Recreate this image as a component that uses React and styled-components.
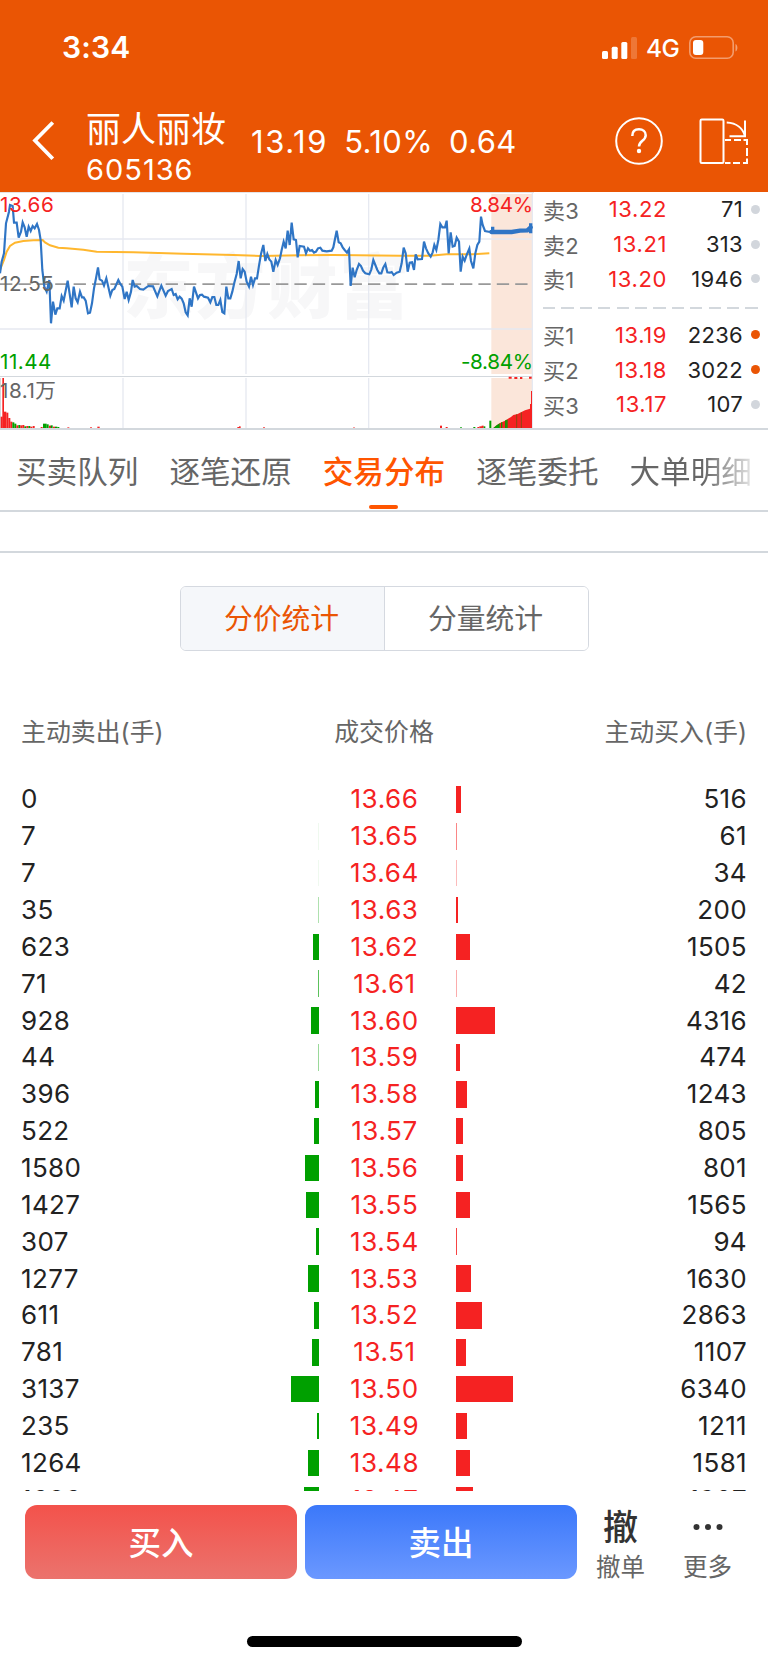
import { useState } from 'react';
import styled, { createGlobalStyle } from 'styled-components';

const GlobalStyle = createGlobalStyle`
    * {
        box-sizing: border-box;
    }
    body {
        margin: 0;
        background: #fff;
        font-family: Inter, "Noto Sans CJK SC", sans-serif;
    }
`;

const Page = styled.div`
    display: flex;
    flex-direction: column;
    width: 768px;
    height: 1663px;
    overflow: hidden;
    background: #fff;
    color: #222;
    white-space: nowrap;
`;

const TopArea = styled.header`
    height: 192px;
    flex: none;
    background: #ea5504;
    color: #fff;
`;

const StatusBar = styled.div`
    display: flex;
    align-items: center;
    justify-content: space-between;
    height: 94px;
    padding: 0 30px 0 62px;
`;

const Clock = styled.div`
    font-size: 30px;
    font-weight: 600;
    letter-spacing: 0.2px;
`;

const StatusIcons = styled.div`
    display: flex;
    align-items: center;
    padding-top: 1px;
    & svg {
        display: block;
    }
`;

const Network = styled.span`
    width: 42px;
    padding-left: 9px;
    font-size: 24.5px;
    font-weight: 450;
    line-height: 24px;
    letter-spacing: -0.5px;
    margin-right: 10px;
`;

const NavBar = styled.div`
    display: flex;
    align-items: center;
    height: 98px;
    padding: 0 19px 4px 32px;
    & svg {
        display: block;
        flex: none;
    }
`;

const StockTitle = styled.div`
    display: flex;
    flex-direction: column;
    width: 139px;
    margin-left: 30px;
    padding-top: 15px;
`;

const StockName = styled.div`
    font-size: 35px;
    line-height: 42px;
`;

const StockCode = styled.div`
    font-size: 29px;
    line-height: 40px;
    letter-spacing: 1px;
`;

const Quote = styled.div`
    display: flex;
    flex: 1;
    gap: 16px;
    margin-left: 26px;
    font-size: 31px;
    letter-spacing: 0.4px;
    & > :first-child {
        letter-spacing: 1.6px;
    }
`;

const NavActions = styled.div`
    display: flex;
    gap: 36px;
    align-items: center;
`;

const Market = styled.section`
    display: flex;
    flex: none;
    height: 238px;
    border-bottom: 2px solid #d3d8dd;
`;

const ChartSvg = styled.svg`
    display: block;
    flex: none;
    width: 534px;
    height: 236px;
    font-family: Inter, "Noto Sans CJK SC", sans-serif;
`;

const OrderBook = styled.div`
    flex: 1;
    padding: 0 8px 0 9px;
    font-size: 22px;
    letter-spacing: 0.3px;
`;

const OrderRow = styled.div`
    display: grid;
    grid-template-columns: 46px 78px 76px 17px;
    align-items: center;
    height: 34.8px;
    text-align: right;
`;

const OrderLabel = styled.span`
    color: #666;
    text-align: left;
    padding-bottom: 1px;
`;

const OrderPrice = styled.span`
    color: #f52222;
    letter-spacing: 0.6px;
`;

const Dot = styled.i`
    justify-self: end;
    width: 9px;
    height: 9px;
    border-radius: 50%;
    background: ${props => (props.$hot ? '#ea5504' : '#d2d6dc')};
`;

const BookDivider = styled.div`
    height: 2px;
    margin: 10.5px 0 8.5px;
    background: repeating-linear-gradient(90deg, #d3d8dd 0 12.3px, transparent 12.3px 18.4px);
`;

const TabBar = styled.nav`
    display: flex;
    flex: none;
    gap: 31px;
    height: 82px;
    padding-left: 16px;
    border-bottom: 2px solid #d3d8dd;
`;

const TabItem = styled.div`
    display: flex;
    flex-direction: column;
    align-items: center;
    flex: none;
    font-size: 30.6px;
    line-height: 44px;
    padding-top: 20px;
    cursor: pointer;
    color: ${props => (props.$active ? '#ff5500' : '#666')};
    font-weight: ${props => (props.$active ? 500 : 400)};
    &:last-child {
        color: transparent;
        background: linear-gradient(90deg, #666 0 60%, #f4f4f4 105%);
        background-clip: text;
    }
    &::after {
        content: '';
        width: 29px;
        height: 4px;
        margin-top: 11px;
        border-radius: 2px;
        background: ${props => (props.$active ? '#ff5500' : 'transparent')};
    }
`;

const Spacer = styled.div`
    flex: none;
    height: 41px;
    border-bottom: 2px solid #d3d8dd;
`;

const Segmented = styled.div`
    display: flex;
    flex: none;
    width: 409px;
    height: 65px;
    margin: 33px auto 0 180px;
    border: 1.5px solid #d5d9e0;
    border-radius: 6px;
    overflow: hidden;
`;

const Segment = styled.div`
    flex: 1;
    padding-right: 2px;
    font-size: 28.8px;
    line-height: 63px;
    text-align: center;
    cursor: pointer;
    color: ${props => (props.$active ? '#ea5504' : '#666')};
    background: ${props => (props.$active ? '#f5f7fa' : '#fff')};
    & + & {
        border-left: 1px solid #d5d9e0;
    }
`;

const TableHead = styled.div`
    display: grid;
    grid-template-columns: 1fr 200px 1fr;
    flex: none;
    padding: 0 21px;
    height: 36px;
    margin: 63px 0 31px;
    font-size: 24.9px;
    line-height: 36px;
    color: #666;
    text-align: center;
    & > :first-child {
        text-align: left;
    }
    & > :last-child {
        text-align: right;
    }
`;

const TableBody = styled.div`
    flex: none;
    height: 710px;
    overflow: hidden;
`;

const PriceRow = styled.div`
    display: grid;
    grid-template-columns: 198px 100px 137px 100px 1fr;
    align-items: center;
    height: 36.86px;
    padding: 0 21px;
    font-size: 26px;
    letter-spacing: 0.35px;
`;

const SellCount = styled.span`
    padding-bottom: 1px;
`;

const Price = styled.span`
    padding: 0 6px 1px 0;
    color: #f52222;
    text-align: center;
    letter-spacing: 0.6px;
`;

const BuyCount = styled.span`
    padding-bottom: 1px;
    text-align: right;
`;

const Bar = styled.div`
    height: 26.5px;
    justify-self: ${props => (props.$side === 'sell' ? 'end' : 'start')};
    background: ${props => (props.$side === 'sell' ? '#00a000' : '#f52222')};
`;

const ActionBar = styled.footer`
    display: flex;
    flex: none;
    height: 88px;
    padding: 14px 0 0 25px;
`;

const TradeButton = styled.button`
    width: 272px;
    height: 74px;
    padding: 0 0 3px;
    border: 0;
    border-radius: 12px;
    color: #fff;
    font: 500 32.5px Inter, "Noto Sans CJK SC", sans-serif;
    background: ${props => (props.$buy
        ? 'linear-gradient(#f3524b, #eb736d)'
        : 'linear-gradient(#3b78fa, #6b98ff)')};
    & + & {
        margin-left: 8px;
    }
`;

const IconAction = styled.div`
    display: flex;
    flex-direction: column;
    align-items: center;
    width: 87px;
    font-size: 24.5px;
    line-height: 36px;
    color: #666;
`;

const ActionGlyph = styled.div`
    display: flex;
    flex: none;
    align-items: center;
    height: 44px;
    font-size: 35px;
    font-weight: 500;
    color: #333;
`;

const HomeIndicator = styled.div`
    flex: none;
    width: 275px;
    height: 10.5px;
    margin: 57px auto 0 247px;
    border-radius: 6px;
    background: #000;
`;

const asks = [
    ['卖3', '13.22', 71],
    ['卖2', '13.21', 313],
    ['卖1', '13.20', 1946],
];

const bids = [
    ['买1', '13.19', 2236, true],
    ['买2', '13.18', 3022, true],
    ['买3', '13.17', 107],
];

const tabs = ['买卖队列', '逐笔还原', '交易分布', '逐笔委托', '大单明细'];
const segments = ['分价统计', '分量统计'];

// [sell, price, buy]
const rows = [
    [0, '13.66', 516],
    [7, '13.65', 61],
    [7, '13.64', 34],
    [35, '13.63', 200],
    [623, '13.62', 1505],
    [71, '13.61', 42],
    [928, '13.60', 4316],
    [44, '13.59', 474],
    [396, '13.58', 1243],
    [522, '13.57', 805],
    [1580, '13.56', 801],
    [1427, '13.55', 1565],
    [307, '13.54', 94],
    [1277, '13.53', 1630],
    [611, '13.52', 2863],
    [781, '13.51', 1107],
    [3137, '13.50', 6340],
    [235, '13.49', 1211],
    [1264, '13.48', 1581],
    [1686, '13.47', 1927],
];

const PX_PER_LOT = 0.009;

// bars thinner than a pixel fade out instead of disappearing
const barStyle = (lots) => {
    const width = lots * PX_PER_LOT;
    return { width: lots ? Math.max(1, width) : 0, opacity: Math.min(1, width) };
};

// the chart is drawn on a canvas three times its displayed size
const priceLine = `0,250 5,215 12,190 18,100 27,65 30,45 38,48 42,98 50,98 56,143 63,125 68,97 74,112 80,140 86,110 92,123
98,108 104,115 111,102 117,120 122,150 127,240 133,290 140,305 148,270 153,400 159,335 166,374 172,355 179,355 185,318
191,332 203,272 215,352 221,290 227,325 233,337 240,305 246,322 251,322 257,332 264,370 270,368 276,340 282,295 288,265
294,232 299,268 306,272 312,287 319,265 331,317 337,300 343,297 355,270 361,282 367,290 374,327 380,305 386,330 393,305
398,270 404,290 410,288 420,297 430,299 445,288 459,289 472,319 484,287 497,317 504,303 515,297 521,315 527,312 533,328
539,320 545,326 551,340 557,367 563,376 569,325 575,350 582,290 594,325 600,315 606,314 612,320 624,323 631,337 637,321
643,321 649,345 655,345 661,330 667,366 673,370 679,290 685,325 691,325 697,305 703,278 710,252 716,213 722,265 728,237
734,245 740,275 747,290 753,260 759,285 765,265 771,265 777,227 783,192 790,165 796,213 802,192 808,208 814,215 820,245
827,210 833,225 840,205 845,180 851,155 857,175 863,122 869,165 875,98 881,148 888,150 893,202 899,168 912,170 918,190
924,175 930,182 936,180 942,188 948,185 954,175 961,173 967,182 980,184 995,182 1000,172 1010,122 1016,157 1022,160
1028,172 1034,180 1041,188 1047,178 1052,288 1058,233 1064,262 1070,240 1077,222 1083,228 1089,242 1096,250 1108,253
1114,238 1120,210 1126,225 1132,240 1138,250 1144,250 1150,232 1156,222 1162,247 1170,248 1175,246 1181,255 1190,248
1199,245 1205,220 1211,173 1217,190 1223,245 1229,218 1236,217 1242,240 1247,193 1253,208 1266,207 1272,155 1278,175
1285,190 1292,200 1298,187 1303,165 1309,180 1315,150 1321,102 1327,112 1335,112 1340,92 1346,190 1352,127 1358,170
1364,168 1370,143 1377,155 1382,245 1388,200 1394,212 1400,195 1408,176 1413,213 1420,235 1426,190 1432,165 1438,155
1443,80 1448,105 1455,123 1470,126`;

const averageLine = `0,240 12,210 20,185 30,168 45,158 70,153 100,151 128,150 135,157 150,166 175,173 200,175 250,179
290,185 400,187 550,191 700,195 780,198 900,196 1000,195 1200,197 1290,197 1340,193 1420,193 1468,190`;

// [x, width, height, colour]
const R = '#f52222';
const G = '#00a000';
const volumes = [
    [2, 6, 34, R], [7, 5, 150, R], [12, 7, 49, R], [19, 6, 46, R], [25, 6, 30, R], [31, 6, 19, R], [37, 6, 17, G],
    [43, 6, 13, G], [49, 6, 8, R], [55, 6, 9, G], [61, 6, 8, R], [67, 6, 9, R], [73, 6, 5, G], [79, 6, 6, R],
    [85, 6, 6, G], [91, 6, 4, R], [98, 6, 6, R], [122, 6, 3, R], [129, 11, 13, G], [140, 6, 11, G], [147, 6, 7, R],
    [152, 6, 8, G], [159, 6, 4, R], [165, 7, 4, G], [172, 6, 3, G], [202, 6, 2, R], [270, 6, 2, R], [292, 7, 4, R],
    [712, 6, 3, R], [717, 5, 5, R], [790, 4, 3, R], [1060, 4, 2, R], [1320, 6, 7, R], [1337, 6, 3, R],
    [1380, 6, 2, G], [1420, 6, 3, G], [1432, 6, 3, R], [1438, 8, 5, R], [1445, 6, 7, R], [1451, 5, 5, G],
    [1468, 6, 22, G],
];

// call auction volume, a rising area with a few green columns in it
const auctionArea = '1480,714 1490,706 1500,699 1515,692 1523,687 1533,681 1540,675 1553,672 1560,668 1575,661 1590,656 1590,714';

const TrendChart = () => (
    <ChartSvg viewBox="0 6 1602 708">
        <rect x="0" y="6" width="1602" height="3" fill="#e3e3e6" />
        <text x="370" y="368" fontSize="210" fontWeight="900" letterSpacing="6" fill="#f7f7f8">东方财富</text>
        <rect x="1474" y="12" width="122" height="540" fill="#fbe6da" />
        <rect x="1474" y="564" width="122" height="150" fill="#fbe6da" />
        <g stroke="#e6e9f1" strokeWidth="4">
            <path d="M0 147H1596M0 417H1596M369 12V552M738 12V552M1106 12V552M369 564V714M738 564V714M1106 564V714M1597 9V714" />
        </g>
        <path d="M0 559.500H1596" stroke="#d3d8dd" strokeWidth="3" />
        <path d="M1.500 564V714" stroke="#d3d8dd" strokeWidth="3" />
        <path d="M0 282.500H1586" stroke="#999" strokeWidth="5" strokeDasharray="37 18.200" />
        {volumes.map(([x, w, h, color]) => (
            <rect key={x} x={x} y={714 - h} width={w} height={h} fill={color} />
        ))}
        <polygon points={auctionArea} fill={R} />
        <polygon points="1480,714 1490,706 1499,700 1499,714" fill={G} />
        <path d="M1505 697V714M1517 691V714M1521 689V714" stroke={G} strokeWidth="3.500" />
        <path d="M1550 673V714M1564 667V714" stroke="#8a4a10" strokeWidth="3" />
        <rect x="1590" y="642" width="3" height="72" fill={R} />
        <rect x="1593" y="603" width="3" height="111" fill={R} />
        <path d="M1526 563h9M1543 564h9M1560 564h7M1587 563h8" stroke={R} strokeWidth="6" />
        <polyline points={averageLine} fill="none" stroke="#ffb72e" strokeWidth="6" />
        <polyline points={priceLine} fill="none" stroke="#2f75c5" strokeWidth="6.500" />
        <path d="M1474 126H1535L1560 122L1582 121L1592 112" fill="none" stroke="#2f75c5" strokeWidth="13" strokeLinecap="round" />
        <path d="M1478 110V124M1592 100V130" stroke="#2f75c5" strokeWidth="10" />
        <g fontSize="62" letterSpacing="1.500">
            <text x="0" y="67" fill={R}>13.66</text>
            <text x="0" y="302" fill="#666">12.55</text>
            <text x="0" y="537" fill={G}>11.44</text>
            <text x="0" y="625" fill="#666">18.1万</text>
            <text x="1598" y="67" fill={R} textAnchor="end" letterSpacing="-1">8.84%</text>
            <text x="1598" y="537" fill={G} textAnchor="end" letterSpacing="-1">-8.84%</text>
        </g>
    </ChartSvg>
);

const SignalIcon = () => (
    <svg width="35" height="22" viewBox="0 0 35 22" fill="#fff">
        <rect x="0" y="14" width="6" height="8" rx="1.500" />
        <rect x="9.700" y="9.700" width="6" height="12.300" rx="1.500" />
        <rect x="19.300" y="5" width="6" height="17" rx="1.500" />
        <rect x="29" y="0" width="6" height="22" rx="1.500" opacity="0.2" />
    </svg>
);

const BatteryIcon = () => (
    <svg width="49" height="23" viewBox="0 0 49 23" fill="none">
        <rect x="0.800" y="0.800" width="43.400" height="21.400" rx="6" stroke="#fff" strokeWidth="1.600" opacity="0.42" />
        <rect x="4" y="4" width="10.300" height="15" rx="3" fill="#fff" />
        <path d="M46.500 8C49 9 49 14.500 46.500 15.500Z" fill="#fff" opacity="0.45" />
    </svg>
);

const BackIcon = () => (
    <svg width="24" height="40" viewBox="0 0 24 40" fill="none" stroke="#fff" strokeWidth="3.800">
        <path d="M20.800 1.500L3 19.500L20.800 37.800" />
    </svg>
);

const HelpIcon = () => (
    <svg width="48" height="48" viewBox="0 0 48 48" fill="none" stroke="#fff" strokeWidth="2">
        <circle cx="24" cy="24" r="22.800" />
        <path d="M17.300 19C17.300 14.500 20 12.300 24 12.300C28 12.300 30.700 14.800 30.700 18.200C30.700 24 24 23.500 24 29.500" strokeWidth="2.500" />
        <circle cx="24" cy="34" r="2.200" fill="#fff" stroke="none" />
    </svg>
);

const RotateIcon = () => (
    <svg width="50" height="47" viewBox="0 0 50 47" fill="none" stroke="#fff" strokeWidth="2">
        <rect x="1.500" y="1.500" width="23" height="43.500" rx="1.200" />
        <path d="M27.700 4.500C38 5 44 11 46 18M46 2.500V18.300H30.500" />
        <path d="M26 22H32M35 22H42M44.500 22H48V27M48 30V38M48 40.500V45H44M41 45H34M31.500 45H26" />
    </svg>
);

const BookRow = ({ label, price, count, hot }) => (
    <OrderRow>
        <OrderLabel>{label}</OrderLabel>
        <OrderPrice>{price}</OrderPrice>
        <span>{count}</span>
        <Dot $hot={hot} />
    </OrderRow>
);

const App = () => {
    const [tab, setTab] = useState(2);
    const [segment, setSegment] = useState(0);

    return (
        <Page>
            <GlobalStyle />
            <TopArea>
                <StatusBar>
                    <Clock>3:34</Clock>
                    <StatusIcons>
                        <SignalIcon />
                        <Network>4G</Network>
                        <BatteryIcon />
                    </StatusIcons>
                </StatusBar>
                <NavBar>
                    <BackIcon />
                    <StockTitle>
                        <StockName>丽人丽妆</StockName>
                        <StockCode>605136</StockCode>
                    </StockTitle>
                    <Quote>
                        <span>13.19</span>
                        <span>5.10%</span>
                        <span>0.64</span>
                    </Quote>
                    <NavActions>
                        <HelpIcon />
                        <RotateIcon />
                    </NavActions>
                </NavBar>
            </TopArea>
            <Market>
                <TrendChart />
                <OrderBook>
                    {asks.map(([label, price, count]) => (
                        <BookRow key={label} label={label} price={price} count={count} />
                    ))}
                    <BookDivider />
                    {bids.map(([label, price, count, hot]) => (
                        <BookRow key={label} label={label} price={price} count={count} hot={hot} />
                    ))}
                </OrderBook>
            </Market>
            <TabBar>
                {tabs.map((name, i) => (
                    <TabItem key={name} $active={i === tab} onClick={() => setTab(i)}>{name}</TabItem>
                ))}
            </TabBar>
            <Spacer />
            <Segmented>
                {segments.map((name, i) => (
                    <Segment key={name} $active={i === segment} onClick={() => setSegment(i)}>{name}</Segment>
                ))}
            </Segmented>
            <TableHead>
                <span>主动卖出(手)</span>
                <span>成交价格</span>
                <span>主动买入(手)</span>
            </TableHead>
            <TableBody>
                {rows.map(([sell, price, buy]) => (
                    <PriceRow key={price}>
                        <SellCount>{sell}</SellCount>
                        <Bar $side="sell" style={barStyle(sell)} />
                        <Price>{price}</Price>
                        <Bar $side="buy" style={barStyle(buy)} />
                        <BuyCount>{buy}</BuyCount>
                    </PriceRow>
                ))}
            </TableBody>
            <ActionBar>
                <TradeButton $buy>买入</TradeButton>
                <TradeButton>卖出</TradeButton>
                <IconAction>
                    <ActionGlyph>撤</ActionGlyph>
                    撤单
                </IconAction>
                <IconAction>
                    <ActionGlyph>
                        <svg width="30" height="6" fill="#333">
                            <circle cx="3.500" cy="3" r="3" />
                            <circle cx="15" cy="3" r="3" />
                            <circle cx="26.500" cy="3" r="3" />
                        </svg>
                    </ActionGlyph>
                    更多
                </IconAction>
            </ActionBar>
            <HomeIndicator />
        </Page>
    );
};

export default App;
